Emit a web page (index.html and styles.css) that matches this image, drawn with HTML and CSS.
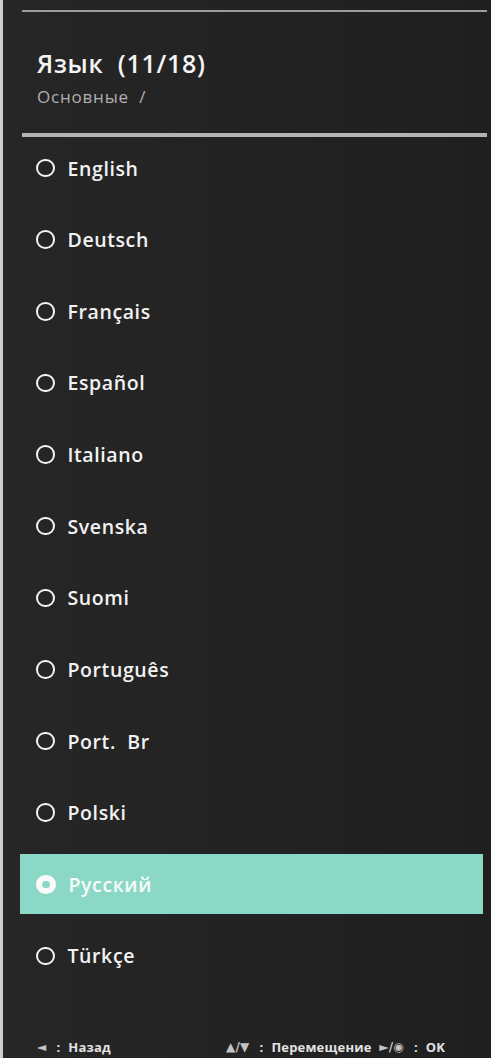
FILE: index.html
```html
<!DOCTYPE html>
<html lang="ru">
<head>
<meta charset="utf-8">
<link rel="stylesheet" href="styles.css">
</head>
<body>
<div class="screen">
  <div class="rule-top"></div>
  <div class="header">
    <div class="title">Язык&nbsp; (11/18)</div>
    <div class="crumb">Основные&nbsp; /</div>
  </div>
  <div class="rule-main"></div>
  <ul class="list">
    <li class="item"><span class="radio"></span><span class="label">English</span></li>
    <li class="item"><span class="radio"></span><span class="label">Deutsch</span></li>
    <li class="item"><span class="radio"></span><span class="label">Français</span></li>
    <li class="item"><span class="radio"></span><span class="label">Español</span></li>
    <li class="item"><span class="radio"></span><span class="label">Italiano</span></li>
    <li class="item"><span class="radio"></span><span class="label">Svenska</span></li>
    <li class="item"><span class="radio"></span><span class="label">Suomi</span></li>
    <li class="item"><span class="radio"></span><span class="label">Português</span></li>
    <li class="item"><span class="radio"></span><span class="label">Port.&nbsp; Br</span></li>
    <li class="item"><span class="radio"></span><span class="label">Polski</span></li>
    <li class="item selected"><span class="radio"></span><span class="label">Русский</span></li>
    <li class="item"><span class="radio"></span><span class="label">Türkçe</span></li>
  </ul>
  <div class="footer">
    <div class="hint back"><span class="glyph">◄</span><span class="sep">:</span>Назад</div>
    <div class="hint"><span class="glyph">▲/▼</span><span class="sep">:</span>Перемещение <span class="glyph gap">►/◉</span><span class="sep">:</span>OK</div>
  </div>
</div>
</body>
</html>
```
FILE: styles.css
```css
html, body {
  margin: 0;
  padding: 0;
  background: #232323;
}
body {
  width: 491px;
  height: 1058px;
  overflow: hidden;
  font-family: "Open Sans", "Noto Sans", sans-serif;
  color: #f2f2f2;
}
.screen {
  height: 1058px;
  border-left: 3px solid #cfcfcf;
  box-sizing: border-box;
  background: linear-gradient(90deg, #262626 0%, #222222 60%, #1f1f1f 100%);
  display: flex;
  flex-direction: column;
}
.rule-top {
  margin: 10px 4px 0 19px;
  height: 2px;
  background: #9c9c9c;
}
.header {
  padding: 36px 0 0 34px;
  height: 85px;
}
.title {
  font-size: 25px;
  font-weight: 600;
  line-height: 30px;
  color: #f4f4f4;
  letter-spacing: 0.7px;
}
.crumb {
  margin-top: 8px;
  font-size: 17px;
  line-height: 22px;
  color: #b0b0b0;
  letter-spacing: 0.8px;
}
.rule-main {
  margin: 0 4px 0 19px;
  height: 4px;
  background: #b4b4b4;
}
.list {
  list-style: none;
  margin: 0;
  padding: 1px 0 0 0;
  display: flex;
  flex-direction: column;
  gap: 11.64px;
}
.item {
  height: 60px;
  margin: 0 8px 0 17px;
  display: flex;
  align-items: center;
  padding-left: 16px;
}
.radio {
  width: 14.5px;
  height: 14.5px;
  border: 2.5px solid #f4f4f4;
  border-radius: 50%;
  flex: none;
}
.label {
  margin-left: 13px;
  font-size: 19.5px;
  font-weight: 600;
  letter-spacing: 0.6px;
  color: #f2f2f2;
}
.item.selected {
  background: #8cd8c6;
}
.item.selected .radio {
  width: 7.5px;
  height: 7.5px;
  border: 6px solid #fafafa;
}
.item.selected .label {
  color: #f7fbfa;
}
.footer {
  margin-top: auto;
  height: 22px;
  padding: 0 0 0 34px;
  display: flex;
  align-items: center;
  font-size: 13px;
  font-weight: 700;
  color: #e2e2e2;
  letter-spacing: 0.2px;
}
.hint {
  display: flex;
  align-items: center;
  white-space: pre;
}
.back {
  width: 189px;
}
.sep {
  margin: 0 8px 0 10px;
}
.glyph {
  font-family: "DejaVu Sans", sans-serif;
  font-size: 12px;
  color: #c4c4c4;
}
.glyph.gap {
  margin-left: 4px;
}
```
